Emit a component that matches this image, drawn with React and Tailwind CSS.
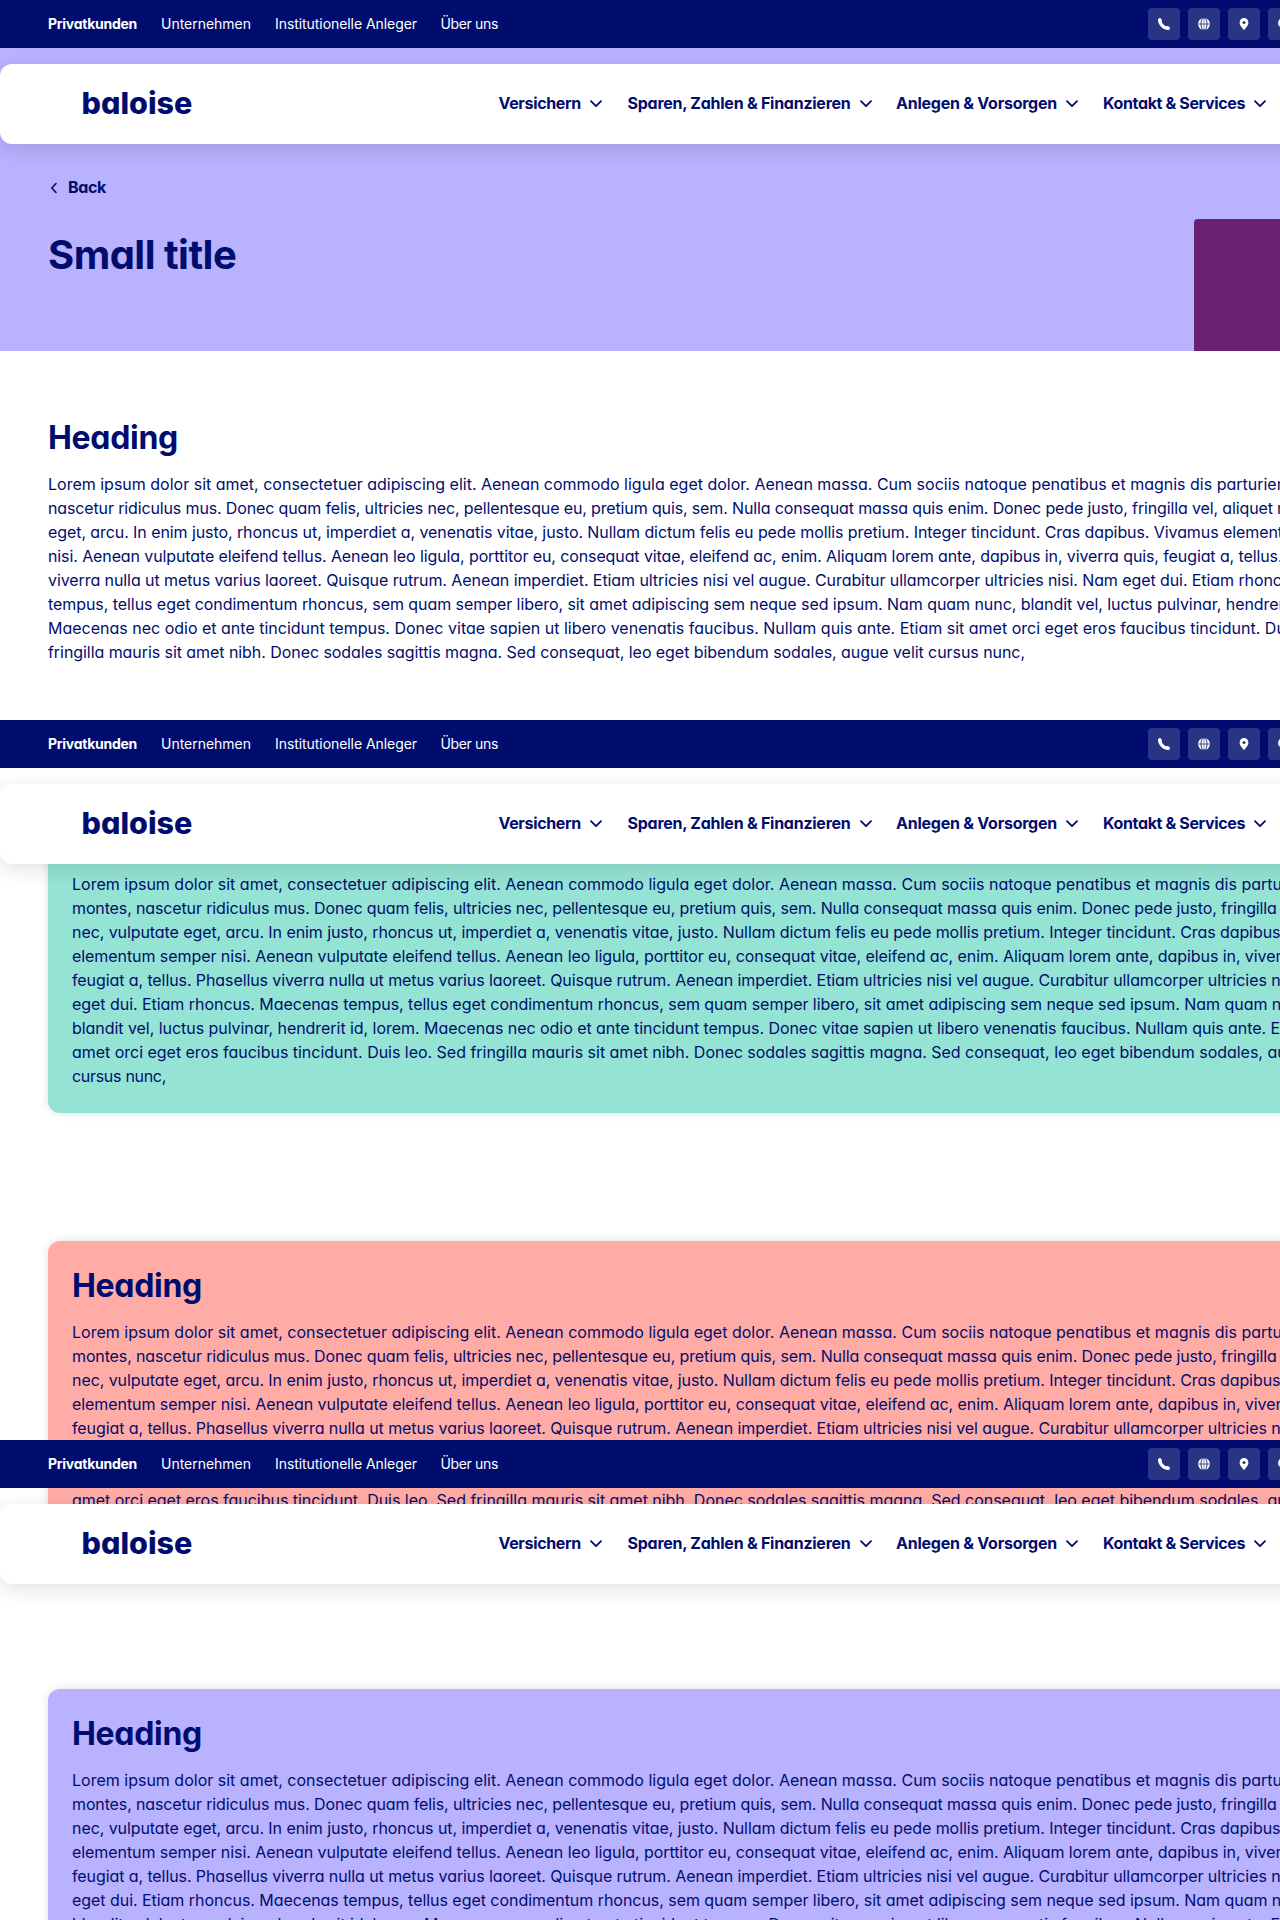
import React from 'react';

const introLines = [
  ['tracking-[-0.002px]', 'Lorem ipsum dolor sit amet, consectetuer adipiscing elit. Aenean commodo ligula eget dolor. Aenean massa. Cum sociis natoque penatibus et magnis dis parturient montes,'],
  ['tracking-[-0.136px]', 'nascetur ridiculus mus. Donec quam felis, ultricies nec, pellentesque eu, pretium quis, sem. Nulla consequat massa quis enim. Donec pede justo, fringilla vel, aliquet nec, vulputate'],
  ['tracking-[-0.08px]', 'eget, arcu. In enim justo, rhoncus ut, imperdiet a, venenatis vitae, justo. Nullam dictum felis eu pede mollis pretium. Integer tincidunt. Cras dapibus. Vivamus elementum semper'],
  ['tracking-[-0.105px]', 'nisi. Aenean vulputate eleifend tellus. Aenean leo ligula, porttitor eu, consequat vitae, eleifend ac, enim. Aliquam lorem ante, dapibus in, viverra quis, feugiat a, tellus. Phasellus'],
  ['tracking-[-0.082px]', 'viverra nulla ut metus varius laoreet. Quisque rutrum. Aenean imperdiet. Etiam ultricies nisi vel augue. Curabitur ullamcorper ultricies nisi. Nam eget dui. Etiam rhoncus. Maecenas'],
  ['tracking-[-0.062px]', 'tempus, tellus eget condimentum rhoncus, sem quam semper libero, sit amet adipiscing sem neque sed ipsum. Nam quam nunc, blandit vel, luctus pulvinar, hendrerit id, lorem.'],
  ['tracking-[-0.001px]', 'Maecenas nec odio et ante tincidunt tempus. Donec vitae sapien ut libero venenatis faucibus. Nullam quis ante. Etiam sit amet orci eget eros faucibus tincidunt. Duis leo. Sed'],
  ['tracking-[-0.063px]', 'fringilla mauris sit amet nibh. Donec sodales sagittis magna. Sed consequat, leo eget bibendum sodales, augue velit cursus nunc,'],
];

const cardLines = [
  ['tracking-[0.003px]', 'Lorem ipsum dolor sit amet, consectetuer adipiscing elit. Aenean commodo ligula eget dolor. Aenean massa. Cum sociis natoque penatibus et magnis dis parturient'],
  ['tracking-[-0.129px]', 'montes, nascetur ridiculus mus. Donec quam felis, ultricies nec, pellentesque eu, pretium quis, sem. Nulla consequat massa quis enim. Donec pede justo, fringilla vel, aliquet'],
  ['tracking-[-0.078px]', 'nec, vulputate eget, arcu. In enim justo, rhoncus ut, imperdiet a, venenatis vitae, justo. Nullam dictum felis eu pede mollis pretium. Integer tincidunt. Cras dapibus. Vivamus'],
  ['tracking-[-0.068px]', 'elementum semper nisi. Aenean vulputate eleifend tellus. Aenean leo ligula, porttitor eu, consequat vitae, eleifend ac, enim. Aliquam lorem ante, dapibus in, viverra quis,'],
  ['tracking-[-0.09px]', 'feugiat a, tellus. Phasellus viverra nulla ut metus varius laoreet. Quisque rutrum. Aenean imperdiet. Etiam ultricies nisi vel augue. Curabitur ullamcorper ultricies nisi. Nam'],
  ['tracking-[-0.043px]', 'eget dui. Etiam rhoncus. Maecenas tempus, tellus eget condimentum rhoncus, sem quam semper libero, sit amet adipiscing sem neque sed ipsum. Nam quam nunc,'],
  ['tracking-[-0.047px]', 'blandit vel, luctus pulvinar, hendrerit id, lorem. Maecenas nec odio et ante tincidunt tempus. Donec vitae sapien ut libero venenatis faucibus. Nullam quis ante. Etiam sit'],
  ['tracking-[-0.025px]', 'amet orci eget eros faucibus tincidunt. Duis leo. Sed fringilla mauris sit amet nibh. Donec sodales sagittis magna. Sed consequat, leo eget bibendum sodales, augue velit'],
  ['tracking-[-0.299px]', 'cursus nunc,'],
];

function Copy({ lines, covered = [] }) {
  return (
    <div className="mt-3.5 text-base leading-6">
      {lines.map(([tracking, text], i) => (
        <p key={text} className={`whitespace-nowrap ${tracking} ${covered.includes(i) ? 'invisible' : ''}`}>{text}</p>
      ))}
    </div>
  );
}

function Heading({ covered = false }) {
  return <h2 className={`mt-0.5 h-10 text-[32px] leading-10 font-bold tracking-[-0.3px] ${covered ? 'invisible' : ''}`}>Heading</h2>;
}

// Lines and headings that sit underneath a sticky bar are kept in flow but not painted.
function Card({ color, headingCovered, coveredLines }) {
  return (
    <section className={`h-80 w-[1400px] shrink-0 rounded-xl px-6 pt-[23px] shadow-[0_0_10px_rgba(0,0,0,0.13)] ${color}`}>
      <Heading covered={headingCovered} />
      <Copy lines={cardLines} covered={coveredLines} />
    </section>
  );
}

function PhoneIcon() {
  return (
    <svg viewBox="0 0 12 12" className="size-3" fill="currentColor">
      <path d="M.6.6C1.3-.1 2.6-.3 3.1.7l.8 1.7c.3.7.1 1.2-.2 1.7C4.500 5.800 5.900 7.300 7.700 8.200c.5-.3 1-.4 1.600-.2l1.900.8c.9.4.9 1.200.6 1.900-.4 1.100-1.300 1.400-2.300 1.300C4.700 11.400.4 7 0 2.500-.1 1.700.1 1 .6.6z" />
    </svg>
  );
}

function GlobeIcon() {
  return (
    <svg viewBox="0 0 12 12" className="size-3" fill="none">
      <circle cx="6" cy="6" r="6" fill="currentColor" />
      <g stroke="#293485">
        <ellipse cx="6" cy="6" rx="3" ry="6.3" strokeWidth="1" />
        <path d="M0 6h12" strokeWidth=".8" />
        <path d="M6 0v12" strokeWidth=".6" />
      </g>
    </svg>
  );
}

function PinIcon() {
  return (
    <svg viewBox="0 0 12 12" className="size-3" fill="currentColor" fillRule="evenodd">
      <path d="M6 0a4.400 4.400 0 0 1 4.400 4.400C10.400 7.200 7.500 10.300 6 12 4.500 10.300 1.600 7.200 1.600 4.400A4.400 4.400 0 0 1 6 0zm0 2.900a1.500 1.500 0 1 0 0 3 1.500 1.500 0 0 0 0-3z" />
    </svg>
  );
}

function SearchIcon() {
  return (
    <svg viewBox="0 0 12 12" className="size-3" fill="none" stroke="currentColor" strokeWidth="1.8" strokeLinecap="round">
      <circle cx="5" cy="5" r="4" />
      <path d="m8 8 3 3" />
    </svg>
  );
}

function IconButton({ children }) {
  return <span className="flex size-8 shrink-0 items-center justify-center rounded bg-[#293485]">{children}</span>;
}

function ChevronDown() {
  return (
    <svg viewBox="0 0 12 8" className="ml-[9px] h-2 w-3 shrink-0" fill="none" stroke="currentColor" strokeWidth="1.8" strokeLinecap="round" strokeLinejoin="round">
      <path d="m1 1.200 5 5 5-5" />
    </svg>
  );
}

function NavItem({ width, tracking, label }) {
  return (
    <span className={`flex shrink-0 items-center whitespace-nowrap ${width} ${tracking}`}>
      <span className="pb-0.5">{label}</span>
      <ChevronDown />
    </span>
  );
}

function NavBar({ top }) {
  return (
    <header className={`absolute left-0 w-[1400px] ${top}`}>
      <div className="flex h-12 items-center bg-[#000d6e] text-sm text-white">
        <nav className="flex w-[1100px] shrink-0 gap-6 pl-12">
          <span className="w-[89px] font-bold tracking-[-0.27px] whitespace-nowrap">Privatkunden</span>
          <span className="w-[90px] tracking-[-0.018px] whitespace-nowrap">Unternehmen</span>
          <span className="w-[141.5px] tracking-[-0.063px] whitespace-nowrap">Institutionelle Anleger</span>
          <span className="tracking-[-0.352px] whitespace-nowrap">Über uns</span>
        </nav>
        <div className="flex gap-2 pl-12">
          <IconButton><PhoneIcon /></IconButton>
          <IconButton><GlobeIcon /></IconButton>
          <IconButton><PinIcon /></IconButton>
          <IconButton><SearchIcon /></IconButton>
        </div>
      </div>
      <div className="mt-4 flex h-20 items-center rounded-xl bg-white shadow-[0_5px_20px_rgba(0,0,0,0.12)]">
        <span className="-mt-[3px] w-[498.5px] shrink-0 pl-[81.5px] text-[30.5px] leading-10 font-extrabold">baloise</span>
        <nav className="flex text-base font-bold">
          <NavItem width="w-[129px]" tracking="tracking-[-0.331px]" label="Versichern" />
          <NavItem width="w-[268.5px]" tracking="tracking-[-0.254px]" label="Sparen, Zahlen & Finanzieren" />
          <NavItem width="w-[207px]" tracking="tracking-[-0.237px]" label="Anlegen & Vorsorgen" />
          <NavItem width="w-[190px]" tracking="tracking-[-0.362px]" label="Kontakt & Services" />
        </nav>
      </div>
    </header>
  );
}

export default function App() {
  return (
    <div className="relative h-[1920px] w-[1280px] overflow-hidden bg-white font-['Inter','Liberation_Sans',sans-serif] text-[#000d6e] [font-feature-settings:'cv11']">
      <div className="flex h-[351px] justify-between bg-[#b8b2ff] pl-12">
        <div className="pt-[175px]">
          <a className="flex h-6 items-center text-base font-bold tracking-[-0.344px]">
            <svg viewBox="0 0 8 12" className="mt-[2px] mr-[10px] ml-[2px] h-3 w-2" fill="none" stroke="currentColor" strokeWidth="1.6" strokeLinecap="round" strokeLinejoin="round">
              <path d="M6 1.500 1.800 6 6 10.500" />
            </svg>
            Back
          </a>
          <h1 className="mt-8 text-[40px] leading-[48px] font-bold tracking-[-0.52px]">Small title</h1>
        </div>
        <div className="mt-[219px] w-[86px] rounded-tl bg-[#6b2072]" />
      </div>
      <main className="pl-12">
        <section className="h-[442px] pt-[65px]">
          <Heading />
          <Copy lines={introLines} />
        </section>
        <div className="flex flex-col gap-32">
          <Card color="bg-[#94e3d4]" headingCovered />
          <Card color="bg-[#ffaca6]" coveredLines={[5, 6, 8]} />
          <Card color="bg-[#b8b2ff]" />
        </div>
      </main>
      <NavBar top="top-0" />
      <NavBar top="top-[720px]" />
      <NavBar top="top-[1440px]" />
    </div>
  );
}
